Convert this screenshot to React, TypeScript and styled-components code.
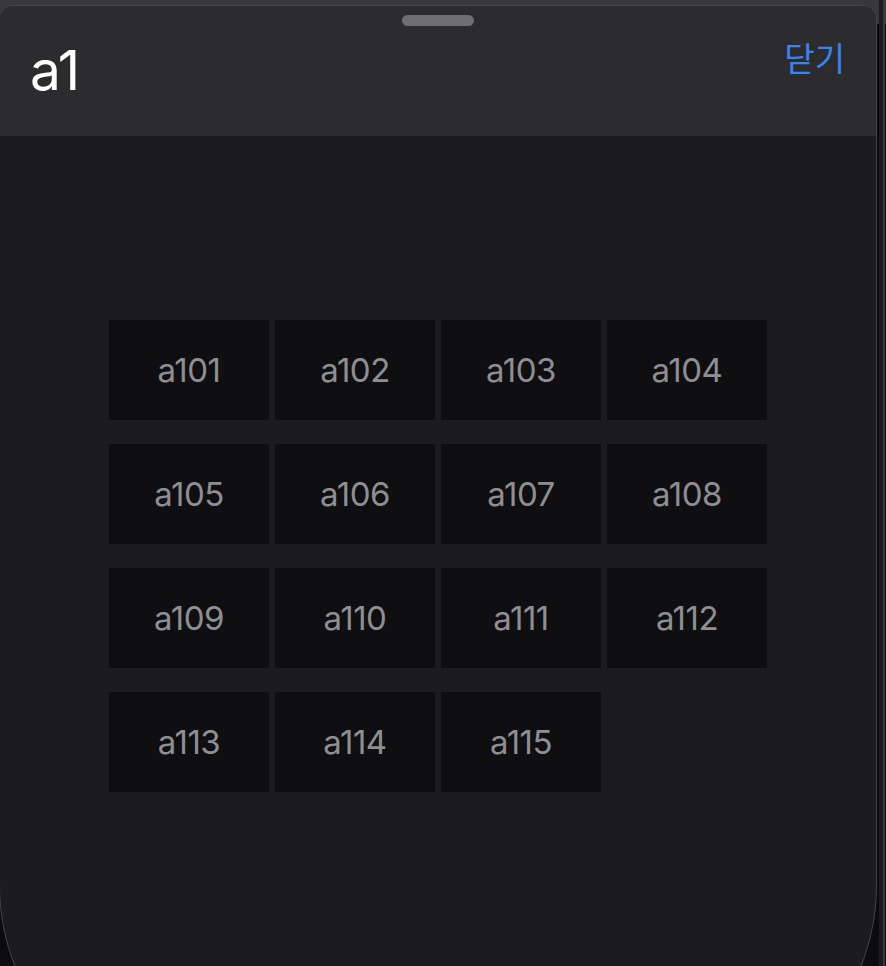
import styled, { createGlobalStyle } from "styled-components"

const GlobalStyle = createGlobalStyle`
  html, body {
    margin: 0;
    padding: 0;
    height: 100%;
    overflow: hidden;
    background: #0c0c0e;
    font-family: "Inter", "Noto Sans CJK KR", "Noto Sans", sans-serif;
  }
`

const Screen = styled.div`
  display: flex;
  height: 966px;
  overflow: hidden;
  background: linear-gradient(to bottom, #38383a 0, #38383a 24px, #0c0c0e 24px);
`
const Sheet = styled.div`
  flex: 0 0 876px;
  height: 1099px;
  margin-top: 6px;
  display: flex;
  flex-direction: column;
  background: #1c1c1e;
  border-radius: 13px 13px 220px 220px;
  box-shadow: 0 0 0 1px #444448;
  overflow: hidden;
`
const Edge = styled.div`
  flex: 0 0 4px;
  margin-left: 3px;
  background: #1c1c1e;
  border-right: 2px solid #3a3a3c;
`
const Header = styled.div`
  height: 130px;
  background: #2c2c2e;
  display: flex;
  flex-direction: column;
  align-items: center;
  padding-top: 9px;
  box-sizing: border-box;
`
const Grabber = styled.div`
  width: 72px;
  height: 11px;
  border-radius: 6px;
  background: #6e6e72;
`
const TitleRow = styled.div`
  align-self: stretch;
  display: flex;
  justify-content: space-between;
  align-items: flex-start;
  padding: 0 31px 0 30px;
`
const Title = styled.h1`
  margin: 17px 0 0;
  font-size: 55px;
  font-weight: 400;
  line-height: 1;
  color: #ffffff;
  letter-spacing: -1px;
`
const CloseButton = styled.button`
  margin-top: 15px;
  padding: 0;
  border: none;
  background: transparent;
  font-family: "Noto Sans CJK KR", sans-serif;
  font-size: 33px;
  line-height: 1;
  color: #3a84f0;
  cursor: pointer;
`
const Body = styled.div`
  flex: 1;
  padding-top: 184px;
`
const Grid = styled.div`
  display: grid;
  grid-template-columns: repeat(4, 160px);
  grid-auto-rows: 100px;
  column-gap: 6px;
  row-gap: 24px;
  justify-content: center;
`
const Cell = styled.button`
  border: none;
  padding: 0;
  background: #0f0f11;
  color: #8e8e93;
  font-family: "Inter", sans-serif;
  font-size: 33px;
  font-weight: 400;
  letter-spacing: -0.5px;
  cursor: pointer;
`

const rooms = Array.from({ length: 15 }, (_, i) => `a${101 + i}`)

export default function App() {
  return (
    <>
      <GlobalStyle />
      <Screen>
        <Sheet>
          <Header>
            <Grabber />
            <TitleRow>
              <Title>a1</Title>
              <CloseButton>닫기</CloseButton>
            </TitleRow>
          </Header>
          <Body>
            <Grid>
              {rooms.map((room) => (
                <Cell key={room}>{room}</Cell>
              ))}
            </Grid>
          </Body>
        </Sheet>
        <Edge />
      </Screen>
    </>
  )
}
